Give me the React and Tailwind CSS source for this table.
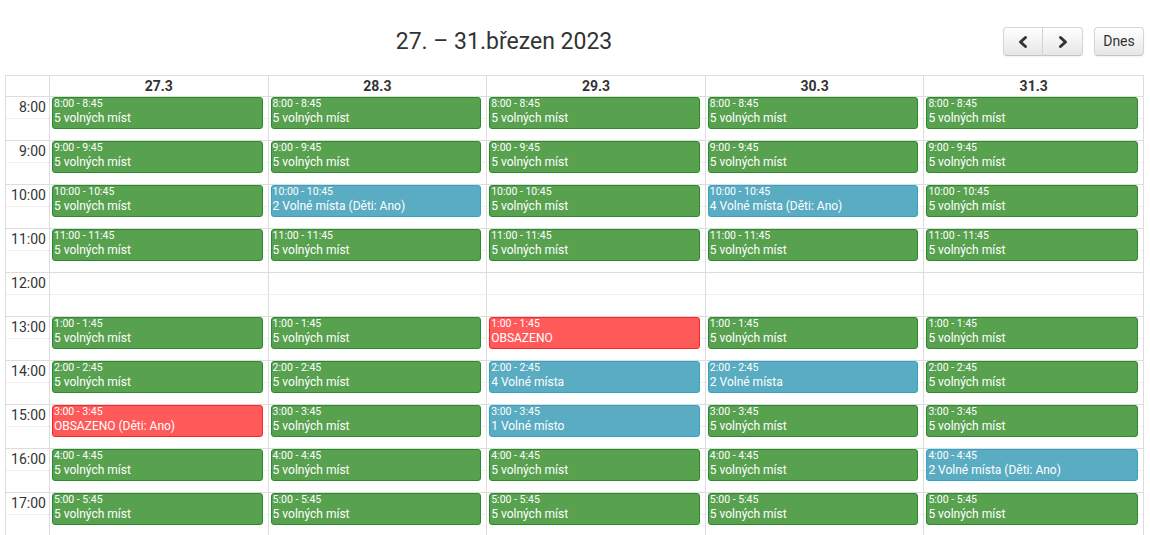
import React from "react";

const days = ["27.3", "28.3", "29.3", "30.3", "31.3"];
const hours = [8, 9, 10, 11, 12, 13, 14, 15, 16, 17];
const slotHours = [8, 9, 10, 11, 13, 14, 15, 16, 17];

const special = {
  "1-10": { c: "blue", t: "2 Volné místa (Děti: Ano)" },
  "3-10": { c: "blue", t: "4 Volné místa (Děti: Ano)" },
  "2-13": { c: "red", t: "OBSAZENO" },
  "2-14": { c: "blue", t: "4 Volné místa" },
  "3-14": { c: "blue", t: "2 Volné místa" },
  "0-15": { c: "red", t: "OBSAZENO (Děti: Ano)" },
  "2-15": { c: "blue", t: "1 Volné místo" },
  "4-16": { c: "blue", t: "2 Volné místa (Děti: Ano)" },
};

const colorCls = {
  green: "bg-[#58a14f] border-[#2b8a2b]",
  blue: "bg-[#5aacc2] border-[#36a2c6]",
  red: "bg-[#ff5a5a] border-[#ff2424]",
};

const tops = {
  8: "top-[0px]",
  9: "top-[44px]",
  10: "top-[88px]",
  11: "top-[132px]",
  13: "top-[220px]",
  14: "top-[264px]",
  15: "top-[308px]",
  16: "top-[352px]",
  17: "top-[396px]",
};

function label(h) {
  const d = h > 12 ? h - 12 : h;
  return `${d}:00 - ${d}:45`;
}

function Chevron({ dir }) {
  return (
    <svg width="12" height="14" viewBox="0 0 12 14" fill="none">
      {dir === "left" ? (
        <polyline points="8.5,2.5 3.5,7 8.5,11.5" stroke="#333" strokeWidth="3" strokeLinecap="round" strokeLinejoin="round" />
      ) : (
        <polyline points="3.5,2.5 8.5,7 3.5,11.5" stroke="#333" strokeWidth="3" strokeLinecap="round" strokeLinejoin="round" />
      )}
    </svg>
  );
}

const btn =
  "h-[29px] flex items-center justify-center bg-gradient-to-b from-white to-[#e6e6e6] border border-[#d6d6d6] border-b-[#c4c4c4] shadow-[inset_0_1px_0_rgba(255,255,255,0.3),0_1px_2px_rgba(0,0,0,0.06)]";

export default function App() {
  return (
    <div className="w-[1150px] h-[535px] overflow-hidden bg-white font-['Roboto',sans-serif] text-[#333]">
      <div className="ml-[5px] w-[1139px] pt-[27px]">
        <div className="flex items-center h-[29px] mb-[19px]">
          <div className="flex-1 text-center text-[23px] leading-[29px] text-[#333]">27. – 31.březen 2023</div>
          <div className="flex items-center">
            <div className="flex">
              <button className={`${btn} w-[40px] rounded-l-[4px]`}>
                <Chevron dir="left" />
              </button>
              <button className={`${btn} w-[40px] rounded-r-[4px] border-l-0`}>
                <Chevron dir="right" />
              </button>
            </div>
            <button className={`${btn} ml-[11px] w-[50px] rounded-[4px] text-[14px] text-[#333]`}>Dnes</button>
          </div>
        </div>

        <div className="border-l border-r border-t border-[#ddd]">
          <div className="grid grid-cols-[44px_repeat(5,minmax(0,1fr))] border-b border-[#ddd] h-[21px]">
            <div className="border-r border-[#ddd]"></div>
            {days.map((d, i) => (
              <div
                key={d}
                className={`text-center font-bold text-[14px] leading-[20px] ${i < 4 ? "border-r border-[#ddd]" : ""}`}
              >
                {d}
              </div>
            ))}
          </div>

          <div className="relative">
            {hours.map((h) => (
              <div key={h}>
                <div className="h-[22px] border-b border-dotted border-[#e3e3e3] flex">
                  <div className="w-[44px] text-right pr-[4px] text-[14px] leading-[21px]">{h}:00</div>
                </div>
                <div className="h-[22px] border-b border-[#ddd]"></div>
              </div>
            ))}

            <div className="absolute inset-0 grid grid-cols-[44px_repeat(5,minmax(0,1fr))]">
              <div className="border-r border-[#ddd]"></div>
              {days.map((d, di) => (
                <div key={d} className={`relative ${di < 4 ? "border-r border-[#ddd]" : ""}`}>
                  {slotHours.map((h) => {
                    const s = special[`${di}-${h}`] || { c: "green", t: "5 volných míst" };
                    return (
                      <div
                        key={h}
                        className={`absolute left-[2px] right-[5px] ${tops[h]} h-[32px] border rounded-[3px] px-[1px] text-white overflow-hidden ${colorCls[s.c]}`}
                      >
                        <div className="text-[10.5px] leading-[12px] whitespace-nowrap">{label(h)}</div>
                        <div className="text-[12px] leading-[17px] whitespace-nowrap">{s.t}</div>
                      </div>
                    );
                  })}
                </div>
              ))}
            </div>
          </div>
        </div>
      </div>
    </div>
  );
}
